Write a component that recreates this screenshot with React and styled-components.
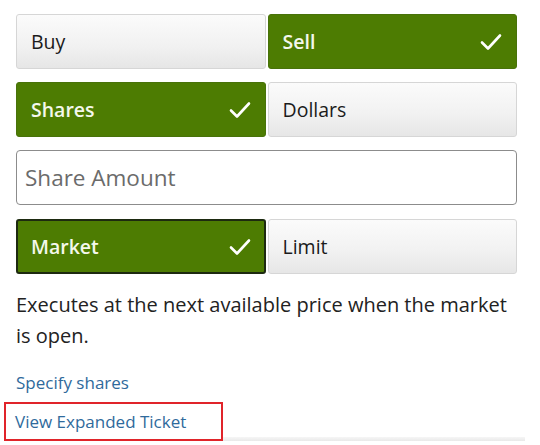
import React, { useState } from 'react';
import styled, { createGlobalStyle } from 'styled-components';

const GlobalStyle = createGlobalStyle`
  body {
    margin: 0;
    background: #ffffff;
    font-family: "Open Sans", Lato, sans-serif;
  }
`;

const Panel = styled.div`
  width: 501px;
  padding: 14px 0 0 16px;
  display: flex;
  flex-direction: column;
`;

const Toggle = styled.div`
  display: grid;
  grid-template-columns: 1fr 1fr;
  gap: 2px;
  margin-bottom: 13px;
`;

const Option = styled.button`
  height: 55px;
  box-sizing: border-box;
  display: flex;
  align-items: center;
  justify-content: space-between;
  padding: 0 14px;
  border-radius: 3px;
  font-family: inherit;
  font-size: 19.5px;
  cursor: pointer;
  text-align: left;
  border: 1px solid ${p => (p.$active ? (p.$outlined ? '#1d2a10' : '#48720a') : '#d6d6d6')};
  background: ${p =>
    p.$active
      ? '#4d7c02'
      : 'linear-gradient(180deg, #fbfbfb 0%, #f1f1f1 60%, #e6e6e6 100%)'};
  color: ${p => (p.$active ? '#f4f8ec' : '#1b1b1b')};
  font-weight: ${p => (p.$active ? 600 : 400)};
  ${p => p.$outlined && p.$active && 'border-width: 2px; padding: 0 13px;'}
`;

const AmountInput = styled.input`
  height: 55px;
  box-sizing: border-box;
  width: 100%;
  border: 1px solid #8c8c8c;
  border-radius: 4px;
  padding: 0 8px;
  font-family: inherit;
  font-size: 22.5px;
  color: #222;
  margin-bottom: 14px;
  outline: none;

  &::placeholder {
    color: #6b6b6b;
  }
`;

const Description = styled.p`
  margin: 2px 0 0;
  font-size: 20px;
  line-height: 31px;
  color: #222;
`;

const LinkText = styled.a`
  display: inline-block;
  color: #2f6a9c;
  font-size: 17px;
  line-height: 20px;
  text-decoration: none;
  cursor: pointer;
`;

const LinkRow = styled.div`
  margin-top: 21px;
`;

const BottomRow = styled.div`
  display: flex;
  align-items: flex-end;
  margin: 8px 0 0 -12px;
`;

const Highlighted = styled.div`
  width: 219px;
  height: 39px;
  box-sizing: border-box;
  border: 2px solid #e0242a;
  display: flex;
  align-items: center;
  padding-left: 9px;
`;

const Shadow = styled.div`
  flex: 1;
  height: 4px;
  margin-right: -8px;
  background: linear-gradient(180deg, #f6f6f6, #e9e9e9);
`;

const Check = () => (
  <svg width="22" height="18" viewBox="0 0 22 18" fill="none">
    <path d="M2 9.5 L8 15.5 L20 2.5" stroke="#ffffff" strokeWidth="2.6" strokeLinecap="round" strokeLinejoin="round" />
  </svg>
);

function Segmented({ options, value, onChange, outlined }) {
  return (
    <Toggle>
      {options.map(o => (
        <Option key={o} $active={value === o} $outlined={outlined} onClick={() => onChange(o)}>
          <span>{o}</span>
          {value === o && <Check />}
        </Option>
      ))}
    </Toggle>
  );
}

export default function App() {
  const [side, setSide] = useState('Sell');
  const [unit, setUnit] = useState('Shares');
  const [type, setType] = useState('Market');

  return (
    <>
      <GlobalStyle />
      <Panel>
        <Segmented options={['Buy', 'Sell']} value={side} onChange={setSide} />
        <Segmented options={['Shares', 'Dollars']} value={unit} onChange={setUnit} />
        <AmountInput placeholder="Share Amount" />
        <Segmented options={['Market', 'Limit']} value={type} onChange={setType} outlined />
        <Description>
          Executes at the next available price when the market is open.
        </Description>
        <LinkRow>
          <LinkText>Specify shares</LinkText>
        </LinkRow>
        <BottomRow>
          <Highlighted>
            <LinkText>View Expanded Ticket</LinkText>
          </Highlighted>
          <Shadow />
        </BottomRow>
      </Panel>
    </>
  );
}
